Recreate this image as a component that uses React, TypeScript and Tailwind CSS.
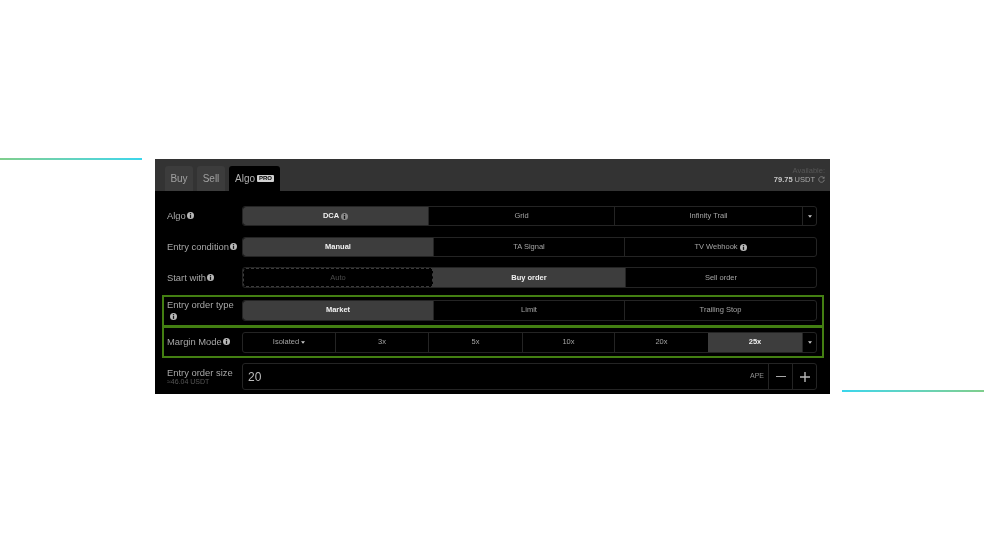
import React from 'react'

const Info: React.FC<{ className?: string }> = ({ className = 'text-[#b8b8b8]' }) => (
  <svg viewBox="0 0 10 10" className={`inline-block w-[7px] h-[7px] shrink-0 ${className}`}>
    <circle cx="5" cy="5" r="5" fill="currentColor" />
    <rect x="4.1" y="1.5" width="1.8" height="1.6" fill="#111" />
    <rect x="4.1" y="4" width="1.8" height="4.4" fill="#111" />
  </svg>
)

const Caret = () => (
  <svg viewBox="0 0 6 4" className="w-[4px] h-[3px]">
    <path d="M0 0h6L3 4z" fill="#c8c8c8" />
  </svg>
)

type Seg = { label: string; w: string; active?: boolean; info?: boolean; caret?: boolean }

const Segments: React.FC<{ items: Seg[]; menu?: boolean; dashedFirst?: boolean }> = ({ items, menu, dashedFirst }) => (
  <div className="flex-1 h-full flex rounded-[3px] border border-[#242424] bg-black">
    {items.map((s, i) => (
      <div
        key={s.label}
        className={`${s.w} h-full flex items-center justify-center gap-[2px] text-[7.5px] ${
          s.active
            ? 'bg-[#3d3d3d] text-[#f0f0f0] font-bold'
            : dashedFirst && i === 0
            ? 'text-[#4c4c4c] border border-dashed border-[#3c3c3c]'
            : 'text-[#a4a4a4]'
        } ${i > 0 && !s.active ? 'border-l border-[#242424]' : ''} ${i === 0 ? 'rounded-l-[3px]' : ''}`}
      >
        {s.label}
        {s.caret && <Caret />}
        {s.info && <Info className={s.active ? 'text-[#8c8c8c]' : 'text-[#b8b8b8]'} />}
      </div>
    ))}
    {menu && (
      <div className="flex-1 h-full flex items-center justify-center border-l border-[#242424]">
        <Caret />
      </div>
    )}
  </div>
)

const Row: React.FC<{ label: React.ReactNode; h: string; mark?: boolean; className?: string; children: React.ReactNode }> = ({
  label,
  h,
  mark,
  className = '',
  children,
}) => (
  <div
    className={`${h} ${className} ml-[7px] mr-[6px] pl-[3px] pr-[5px] flex items-center border-2 ${
      mark ? 'border-[#437f12]' : 'border-transparent border-y-0'
    }`}
  >
    <div className="w-[75px] shrink-0 text-[9.4px] leading-[11px] text-[#a8a8a8]">{label}</div>
    <div className={`flex-1 flex ${mark ? 'h-[21px]' : 'h-full'}`}>{children}</div>
  </div>
)

export default function App() {
  return (
    <div className="w-[984px] h-[554px] overflow-hidden bg-white flex items-start pt-[158px] font-['Liberation_Sans',sans-serif]">
      <div className="w-[142px] h-[2px] bg-gradient-to-r from-[#7fce8c] to-[#3ad6ec]" />
      <div className="ml-[13px] mt-px w-[675px] h-[235px] bg-black blur-[0.5px]">
        <div className="h-[32px] bg-[#333333] flex items-end pl-[10px] pr-[5px]">
          <div className="h-[25px] w-[28px] mr-[4px] rounded-t-[3px] bg-[#3c3c3c] flex items-center justify-center text-[10px] text-[#a0a0a0]">
            Buy
          </div>
          <div className="h-[25px] w-[28px] mr-[4px] rounded-t-[3px] bg-[#3c3c3c] flex items-center justify-center text-[10px] text-[#a0a0a0]">
            Sell
          </div>
          <div className="h-[25px] w-[51px] rounded-t-[3px] bg-black flex items-center justify-center gap-[2px] text-[10px] text-[#b0b0b0]">
            Algo
            <span className="bg-[#d0d0d0] text-black text-[6px] font-bold leading-[7px] px-[2px] rounded-[1px]">PRO</span>
          </div>
          <div className="ml-auto self-center text-right text-[7.5px] leading-[9px]">
            <div className="text-[#565656]">Available:</div>
            <div className="flex items-center justify-end gap-[2px] text-[#a8a8a8]">
              <span className="font-bold text-[#c8c8c8]">79.75</span> USDT
              <svg viewBox="0 0 10 10" className="ml-px w-[7px] h-[7px]">
                <path d="M8.5 3A4 4 0 1 0 9 5.5M8.8 1v2.3H6.5" fill="none" stroke="#909090" strokeWidth="1" />
              </svg>
            </div>
          </div>
        </div>

        <div className="flex flex-col pt-[15px]">
          <Row h="h-[20px]" label={<span className="flex items-center gap-[1px] -mt-[2px]">Algo <Info /></span>}>
            <Segments
              menu
              items={[
                { label: 'DCA', w: 'w-[185px]', active: true, info: true },
                { label: 'Grid', w: 'w-[186px]' },
                { label: 'Infinity Trail', w: 'w-[188px]' },
              ]}
            />
          </Row>
          <Row h="h-[20px]" className="mt-[11px]" label={<span className="flex items-center gap-[1px] -mt-[2px] whitespace-nowrap">Entry condition <Info /></span>}>
            <Segments
              items={[
                { label: 'Manual', w: 'w-[190px]', active: true },
                { label: 'TA Signal', w: 'w-[191px]' },
                { label: 'TV Webhook', w: 'flex-1', info: true },
              ]}
            />
          </Row>
          <Row h="h-[21px]" className="mt-[10px]" label={<span className="flex items-center gap-[1px]">Start with <Info /></span>}>
            <Segments
              dashedFirst
              items={[
                { label: 'Auto', w: 'w-[190px]' },
                { label: 'Buy order', w: 'w-[192px]', active: true },
                { label: 'Sell order', w: 'flex-1' },
              ]}
            />
          </Row>
          <Row
            h="h-[32px]"
            mark
            className="mt-[7px] pb-[2px]"
            label={
              <span className="block">
                Entry order type
                <br />
                <Info className="ml-[3px] text-[#b8b8b8]" />
              </span>
            }
          >
            <Segments
              items={[
                { label: 'Market', w: 'w-[190px]', active: true },
                { label: 'Limit', w: 'w-[191px]' },
                { label: 'Trailing Stop', w: 'flex-1' },
              ]}
            />
          </Row>
          <Row h="h-[32px]" mark className="-mt-[1px]" label={<span className="flex items-center gap-[1px] -mt-[2px]">Margin Mode <Info /></span>}>
            <Segments
              menu
              items={[
                { label: 'Isolated', w: 'w-[92px]', caret: true },
                { label: '3x', w: 'w-[93px]' },
                { label: '5x', w: 'w-[94px]' },
                { label: '10x', w: 'w-[92px]' },
                { label: '20x', w: 'w-[94px]' },
                { label: '25x', w: 'w-[94px]', active: true },
              ]}
            />
          </Row>
          <Row
            h="h-[27px]"
            className="mt-[5px]"
            label={
              <span className="block -mt-[2px]">
                Entry order size
                <span className="block text-[7px] leading-[7px] text-[#565656]">≈46.04 USDT</span>
              </span>
            }
          >
            <div className="flex-1 h-full flex items-center rounded-[3px] border border-[#242424] bg-black">
              <span className="ml-[5px] text-[12px] text-[#bcbcbc]">20</span>
              <span className="ml-auto mr-[4px] text-[7px] text-[#909090]">APE</span>
              <div className="w-[24px] h-full border-l border-[#242424] flex items-center justify-center">
                <div className="w-[10px] h-[1.5px] bg-[#a8a8a8]" />
              </div>
              <div className="w-[24px] h-full border-l border-[#242424] flex items-center justify-center">
                <svg viewBox="0 0 10 10" className="w-[10px] h-[10px]">
                  <path d="M5 0v10M0 5h10" stroke="#b8b8b8" strokeWidth="1.4" />
                </svg>
              </div>
            </div>
          </Row>
        </div>
      </div>
      <div className="ml-[12px] mt-[232px] w-[142px] h-[2px] bg-gradient-to-r from-[#3ad6ec] to-[#7fce8c]" />
    </div>
  )
}
